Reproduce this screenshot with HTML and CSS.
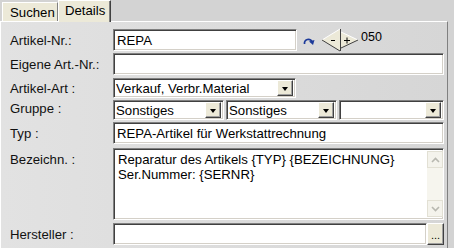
FILE: index.html
```html
<!DOCTYPE html>
<html>
<head>
<meta charset="utf-8">
<link rel="stylesheet" href="styles.css">
</head>
<body>
<div class="tabs">
  <div class="tab tab-off">Suchen</div>
  <div class="tab tab-on">Details</div>
</div>
<div class="panel">
  <div class="row r1">
    <div class="label">Artikel-Nr.:</div>
    <div class="field w-nr"><span>REPA</span></div>
    <svg class="redo" width="12" height="10" viewBox="0 0 12 10">
      <path d="M1.5 8 C1 3.5, 7 1.5, 9 5.5" stroke="#1c3a9a" stroke-width="1.7" fill="none"/>
      <polygon points="6,5.5 11.5,4 10,9" fill="#1c3a9a"/>
    </svg>
    <svg class="spin" width="40" height="24" viewBox="0 0 40 24">
      <polygon points="1,12 19,1 19,23" fill="#ece9d8"/>
      <polyline points="1,12 19,1" stroke="#ffffff" fill="none"/>
      <polyline points="1,12 19,23" stroke="#404040" fill="none"/>
      <polygon points="20,4 37,12 20,20" fill="#ece9d8"/>
      <polyline points="20,4 37,12" stroke="#ffffff" fill="none"/>
      <polyline points="20,20 37,12" stroke="#404040" fill="none"/>
      <line x1="19.5" y1="1" x2="19.5" y2="23" stroke="#404040"/>
      <line x1="10" y1="12.5" x2="14" y2="12.5" stroke="#000"/>
      <line x1="23" y1="12.5" x2="29" y2="12.5" stroke="#000"/>
      <line x1="26" y1="9.5" x2="26" y2="15.5" stroke="#000"/>
    </svg>
    <span class="num">050</span>
  </div>
  <div class="row r2">
    <div class="label">Eigene Art.-Nr.:</div>
    <div class="field w-full"></div>
  </div>
  <div class="row r3">
    <div class="label">Artikel-Art :</div>
    <div class="field select w-art"><span>Verkauf, Verbr.Material</span><div class="dd"><i></i></div></div>
  </div>
  <div class="row r4">
    <div class="label lbl-up">Gruppe :</div>
    <div class="selects">
      <div class="field select w-g1"><span>Sonstiges</span><div class="dd"><i></i></div></div>
      <div class="field select w-g1"><span>Sonstiges</span><div class="dd"><i></i></div></div>
      <div class="field select w-g3"><span></span><div class="dd"><i></i></div></div>
    </div>
  </div>
  <div class="row r5">
    <div class="label">Typ :</div>
    <div class="field w-full"><span>REPA-Artikel für Werkstattrechnung</span></div>
  </div>
  <div class="row r6">
    <div class="label lbl-top">Bezeichn. :</div>
    <div class="field area w-full">
      <div class="area-text">Reparatur des Artikels {TYP} {BEZEICHNUNG}<br>Ser.Nummer: {SERNR}</div>
      <div class="sb">
        <div class="sb-btn"><svg width="9" height="6" viewBox="0 0 9 6"><polyline points="1,5 4.5,1.5 8,5" stroke="#b8b8b0" stroke-width="1.6" fill="none"/></svg></div>
        <div class="sb-track"></div>
        <div class="sb-btn"><svg width="9" height="6" viewBox="0 0 9 6"><polyline points="1,1 4.5,4.5 8,1" stroke="#b8b8b0" stroke-width="1.6" fill="none"/></svg></div>
      </div>
    </div>
  </div>
  <div class="row r7">
    <div class="label">Hersteller :</div>
    <div class="field w-her"></div>
    <div class="dots">...</div>
  </div>
</div>
</body>
</html>
```
FILE: styles.css
```css
html, body {
  margin: 0;
  padding: 0;
}
body {
  width: 454px;
  height: 248px;
  overflow: hidden;
  background: #d3d3d3;
  font-family: "Liberation Sans", Arial, sans-serif;
  font-size: 13.2px;
  color: #000;
}
.tabs {
  display: flex;
  align-items: flex-end;
  height: 21px;
  padding-left: 2px;
  position: relative;
  z-index: 1;
}
.tab {
  box-sizing: border-box;
  background: #ece9d8;
  border-top: 1px solid #ffffff;
  border-left: 1px solid #ffffff;
  border-right: 1px solid #808080;
  padding: 2px 6px 0 6px;
  line-height: 16px;
}
.tab-off {
  height: 19px;
  width: 56px;
  padding-left: 7px;
}
.tab-on {
  height: 22px;
  width: 53px;
  margin-bottom: -1px;
  padding-top: 2px;
  border-right-color: #404040;
  box-shadow: inset -1px 0 0 #808080;
}
.panel {
  box-sizing: border-box;
  width: 448px;
  height: 227px;
  border-top: 1px solid #ffffff;
  border-left: 1px solid #ffffff;
  border-right: 1px solid #808080;
  background: linear-gradient(to right, #e2e2e2, #d6d6d6);
  padding-left: 9px;
}
.row {
  display: flex;
  align-items: center;
}
.label {
  width: 103px;
  flex: none;
  color: #111;
}
.lbl-up { margin-top: -3px; }
.lbl-top { align-self: flex-start; padding-top: 4px; }
.r1 { margin-top: 7px; height: 22px; }
.r2 { margin-top: 2px; height: 22px; }
.r3 { margin-top: 3px; height: 20px; }
.r4 { margin-top: 2px; height: 20px; }
.r5 { margin-top: 2px; height: 22px; }
.r6 { margin-top: 4px; height: 72px; }
.r7 { margin-top: 3px; height: 22px; }
.field {
  box-sizing: border-box;
  height: 100%;
  background: #ffffff;
  border-top: 1px solid #808080;
  border-left: 1px solid #808080;
  border-bottom: 1px solid #ffffff;
  border-right: 1px solid #ffffff;
  box-shadow: inset 1px 1px 0 #404040, inset -1px -1px 0 #d4d0c8;
  display: flex;
  align-items: center;
  padding-left: 3px;
  white-space: nowrap;
  overflow: hidden;
}
.w-nr { width: 184px; }
.w-full { width: 331px; }
.w-art { width: 183px; }
.w-g1 { width: 111px; }
.w-g3 { width: 105px; }
.w-her { width: 314px; }
.redo { margin-left: 6px; margin-top: 1px; }
.spin { margin-left: 6px; }
.num { margin-left: 0; margin-top: -6px; font-size: 12.5px; }
.selects {
  display: flex;
  gap: 2px;
  height: 100%;
}
.select {
  padding-left: 2px;
  padding-right: 2px;
}
.select span {
  flex: 1;
}
.dd {
  box-sizing: border-box;
  width: 16px;
  height: 16px;
  background: #ece9d8;
  border-top: 1px solid #ffffff;
  border-left: 1px solid #ffffff;
  border-right: 1px solid #404040;
  border-bottom: 1px solid #404040;
  box-shadow: inset -1px -1px 0 #a0a0a0;
  display: flex;
  align-items: center;
  justify-content: center;
  flex: none;
}
.dd i {
  width: 0;
  height: 0;
  border-left: 3.5px solid transparent;
  border-right: 3.5px solid transparent;
  border-top: 4px solid #000;
  margin-top: 1px;
}
.area {
  align-items: stretch;
  padding: 2px 0 2px 3px;
}
.area-text {
  flex: 1;
  line-height: 15px;
  padding-top: 1px;
  padding-left: 1px;
}
.sb {
  width: 16px;
  display: flex;
  flex-direction: column;
  background: #f6f5ee;
}
.sb-btn {
  height: 17px;
  box-sizing: border-box;
  border: 1px solid #e2e0d4;
  background: #f4f3ec;
  display: flex;
  align-items: center;
  justify-content: center;
}
.sb-track {
  flex: 1;
}
.dots {
  box-sizing: border-box;
  width: 17px;
  height: 22px;
  margin-left: 0;
  background: #ece9d8;
  border-top: 1px solid #ffffff;
  border-left: 1px solid #ffffff;
  border-right: 1px solid #404040;
  border-bottom: 1px solid #404040;
  box-shadow: inset -1px -1px 0 #a0a0a0;
  font-size: 11px;
  line-height: 11px;
  display: flex;
  align-items: flex-end;
  justify-content: center;
  padding-bottom: 3px;
  letter-spacing: 0;
}
```
